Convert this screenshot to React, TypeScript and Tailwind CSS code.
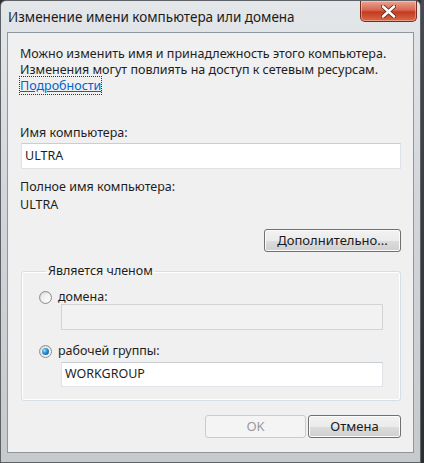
import React from "react";

const font = { fontFamily: '"Noto Sans", "Open Sans", sans-serif' };

function Radio({ checked }: { checked?: boolean }) {
  return (
    <span className="relative flex h-[13px] w-[13px] shrink-0 items-center justify-center rounded-full border border-[#8e8f8f] bg-gradient-to-br from-[#cfd1d3] to-[#fafafa]">
      <span className="h-[9px] w-[9px] rounded-full bg-gradient-to-br from-[#e6e7e8] to-[#ffffff]" />
      {checked && (
        <span className="absolute h-[7px] w-[7px] rounded-full bg-[radial-gradient(circle_at_35%_35%,#9fe0ff_0%,#2a8ac6_45%,#0b4a78_100%)]" />
      )}
    </span>
  );
}

function Button({ label, disabled, w }: { label: string; disabled?: boolean; w: string }) {
  return (
    <div
      className={
        "flex h-[23px] items-center justify-center rounded-[3px] border text-[13px] " +
        w +
        (disabled
          ? " border-[#c9cbcd] bg-[#f4f4f4] text-[#9a9a9a]"
          : " border-[#707070] bg-[linear-gradient(#f2f2f2_0%,#ebebeb_50%,#dddddd_51%,#cfcfcf_100%)] text-[#1b1b1b] shadow-[inset_0_0_0_1px_#fcfcfc]")
      }
    >
      {label}
    </div>
  );
}

export default function App() {
  return (
    <div className="flex h-[463px] w-[424px] bg-[#2e3134]" style={font}>
      <div className="flex h-[463px] w-[421px] flex-col rounded-t-[6px] border border-[#5d6266] bg-[linear-gradient(#e4e7ea,#d3d7db_40%,#c6cacd)]">
        {/* title bar */}
        <div className="flex h-[31px] shrink-0 items-start">
          <div className="pl-[7px] pt-[6px] text-[13.5px] leading-[20px] text-[#1c1c1c]">
            Изменение имени компьютера или домена
          </div>
          <div className="ml-auto mr-[3px] flex h-[21px] w-[57px] items-center justify-center rounded-b-[5px] border border-t-0 border-[#7a2a1e] bg-[linear-gradient(#e9a593_0%,#d8674f_45%,#c33b1f_55%,#d86a45_100%)] shadow-[inset_0_0_0_1px_rgba(255,255,255,0.35)]">
            <svg width="15" height="13" viewBox="0 0 15 13">
              <path
                d="M2 1.5 L13 11.5 M13 1.5 L2 11.5"
                stroke="#5a2218"
                strokeWidth="4.2"
                strokeLinecap="round"
              />
              <path
                d="M2 1.5 L13 11.5 M13 1.5 L2 11.5"
                stroke="#ffffff"
                strokeWidth="2.6"
                strokeLinecap="round"
              />
            </svg>
          </div>
        </div>

        {/* client area */}
        <div className="mx-[6px] mb-[9px] flex flex-1 flex-col border border-[#8f969c] bg-[#f0f0f0] px-[12px] text-[12.5px] text-[#1e1e1e]">
          <div className="mt-[13px] leading-[16px]">
            <div>Можно изменить имя и принадлежность этого компьютера.</div>
            <div>Изменения могут повлиять на доступ к сетевым ресурсам.</div>
            <div>
              <span className="text-[#0066cc] underline outline outline-1 outline-dotted outline-[#333]">
                Подробности
              </span>
            </div>
          </div>

          <div className="mt-[31px] leading-[16px]">Имя компьютера:</div>
          <div className="mt-[2px] ml-[1px] flex h-[26px] items-center border border-[#dfe3e7] border-t-[#c9ced3] bg-white pl-[3px]">
            ULTRA
          </div>

          <div className="mt-[10px] leading-[16px]">Полное имя компьютера:</div>
          <div className="mt-[2px] leading-[16px]">ULTRA</div>

          <div className="mt-[16px] flex justify-end">
            <Button label="Дополнительно..." w="w-[137px]" />
          </div>

          <fieldset className="mt-[11px] ml-[1px] rounded-[3px] border border-[#d5dfe5] pb-[13px] pl-[17px] pr-[17px] shadow-[inset_0_0_0_1px_#ffffff]">
            <legend className="ml-[7px] px-[2px] leading-[16px]">Является членом</legend>
            <div className="mt-[11px] flex h-[14px] items-center gap-[6px]">
              <Radio />
              <span>домена:</span>
            </div>
            <div className="ml-[22px] mt-[0px] h-[26px] border border-[#d2d4d6] bg-[#f2f2f2]" />
            <div className="mt-[14px] flex h-[14px] items-center gap-[6px]">
              <Radio checked />
              <span>рабочей группы:</span>
            </div>
            <div className="ml-[22px] mt-[4px] flex h-[25px] items-center border border-[#dfe3e7] border-t-[#c9ced3] bg-white pl-[3px]">
              WORKGROUP
            </div>
          </fieldset>

          <div className="mt-[14px] flex justify-end gap-[2px]">
            <Button label="OK" disabled w="w-[101px]" />
            <Button label="Отмена" w="w-[93px]" />
          </div>
        </div>
      </div>
      <div className="flex-1 bg-[linear-gradient(#474b4f,#2b2d30)]" />
    </div>
  );
}
